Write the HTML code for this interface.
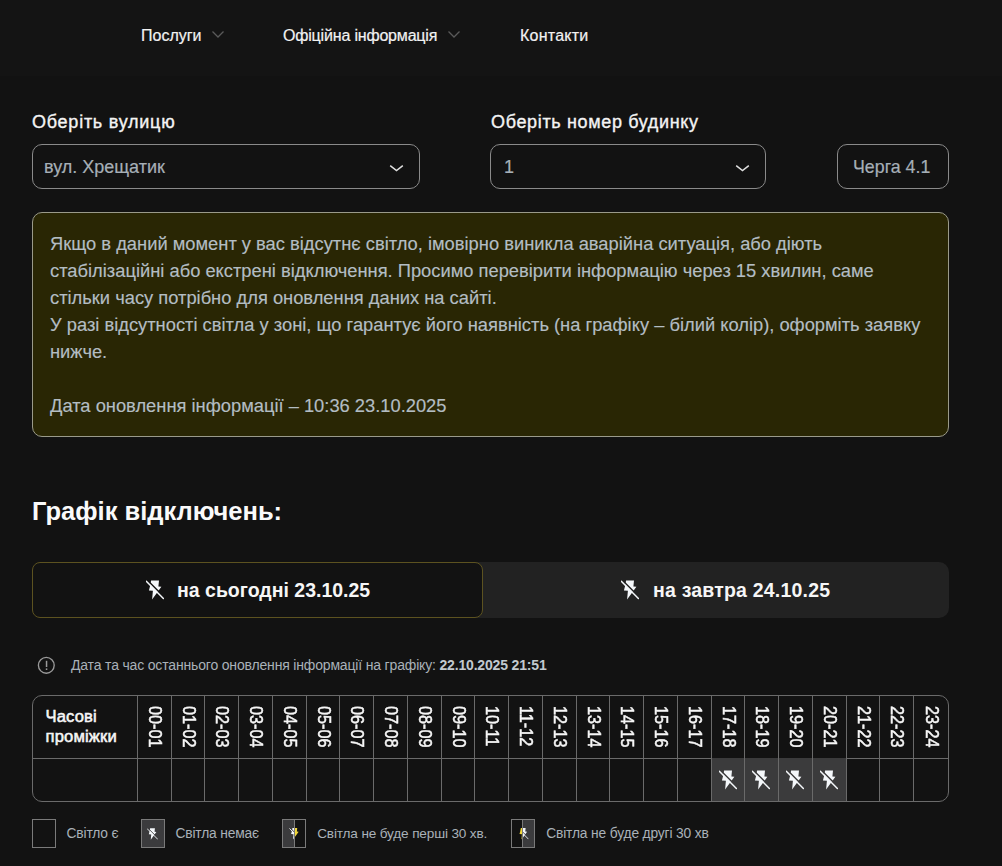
<!DOCTYPE html>
<html lang="uk">
<head>
<meta charset="utf-8">
<style>
*{box-sizing:border-box;margin:0;padding:0}
html,body{width:1002px;height:866px;overflow:hidden;background:#121212;font-family:"Liberation Sans",sans-serif;color:#fff}
.abs{position:absolute;white-space:nowrap}
.hdr{position:absolute;left:0;top:0;width:1002px;height:76px;background:#141414}
.nav{font-size:16px;color:#f2f2f2;line-height:16px;-webkit-text-stroke:0.2px #f2f2f2}
.chev{position:absolute}
.lbl{font-size:18px;letter-spacing:0.5px;color:#f4f4f4;line-height:18px;-webkit-text-stroke:0.35px #f4f4f4}
.sel{position:absolute;border:1px solid #8a8a8a;border-radius:10px;background:#121212}
.seltxt{font-size:18px;color:#a6afb7;line-height:18px;-webkit-text-stroke:0.2px #a6afb7}
.info{position:absolute;left:32px;top:212px;width:917px;height:225px;background:#292604;border:1px solid #9a9a8a;border-radius:10px}
.itxt{font-size:18.32px;color:#b3bdc3;line-height:27px;-webkit-text-stroke:0.15px #b3bdc3}
h2{position:absolute;left:32px;font-size:25.5px;font-weight:700;color:#fafafa;line-height:25px;white-space:nowrap}
.tabs{position:absolute;left:32px;top:562px;width:917px;height:56px;background:#222;border-radius:10px}
.tab1{position:absolute;left:32px;top:562px;width:451px;height:56px;background:#121212;border:1px solid #5c5220;border-radius:8px}
.tabtxt{font-size:19.5px;font-weight:700;color:#f6f6f6;line-height:20px}
.upd{font-size:14px;letter-spacing:-0.17px;color:#a9b1b8;line-height:14px}
.upd b{color:#c2c9cf}
.tbl{position:absolute;left:32px;top:695px;width:917px;height:107px;border:1px solid #6a6a6a;border-radius:10px;overflow:hidden}
.vl{position:absolute;background:#6a6a6a;width:1px}
.hl{position:absolute;background:#6a6a6a;height:1px}
.off{position:absolute;background:#3b3b3c}
.vt{position:absolute;writing-mode:vertical-rl;font-size:18px;font-weight:400;-webkit-text-stroke:0.5px #f6f6f6;color:#f6f6f6;line-height:18px;white-space:nowrap;transform:scaleY(0.9);transform-origin:50% 0}
.th{font-size:16.6px;letter-spacing:0.15px;font-weight:400;-webkit-text-stroke:0.55px #f6f6f6;color:#f6f6f6;line-height:20px}
.lg{position:absolute;top:819px;width:24px;height:29px;border:1px solid #7a7a7a}
.lgt{font-size:13.8px;letter-spacing:-0.15px;color:#a9b1b8;line-height:14px}
</style>
</head>
<body>
<svg width="0" height="0" style="position:absolute">
<defs>
<mask id="gap" maskUnits="userSpaceOnUse" x="0" y="0" width="40" height="40">
<rect x="0" y="0" width="40" height="40" fill="#fff"/>
<line x1="7.3" y1="9.65" x2="24.5" y2="26.8" stroke="#000" stroke-width="1.6"/>
</mask>
<symbol id="boltoff" viewBox="6 9.5 18 19.8">
<g fill="#f4f7fa">
<path mask="url(#gap)" d="M11.1 9.9 L19 9.9 L18.4 15.8 L21.4 16.2 L12.1 28.9 L12.9 20.2 L8.9 19.8 L9.9 16.2 Z"/>
<line x1="6.3" y1="10.7" x2="23.4" y2="27.9" stroke="#f4f7fa" stroke-width="1.5" stroke-linecap="round"/>
</g>
</symbol>
<symbol id="bolty" viewBox="6 9.5 18 19.8">
<path fill="#f2d83a" d="M11.1 9.9 L19 9.9 L18.4 15.8 L21.4 16.2 L12.1 28.9 L12.9 20.2 L8.9 19.8 L9.9 16.2 Z"/>
</symbol>
<clipPath id="cl"><rect x="0" y="0" width="12" height="29"/></clipPath>
<clipPath id="cr"><rect x="12" y="0" width="12" height="29"/></clipPath>
</defs>
</svg>

<div class="hdr"></div>
<div class="abs nav" style="left:141px;top:28px">Послуги</div>
<svg class="chev" style="left:211px;top:29.5px" width="14" height="9"><path d="M1.5 1.5 L7 7 L12.5 1.5" fill="none" stroke="#5a5a5a" stroke-width="1.3"/></svg>
<div class="abs nav" style="left:283px;top:28px;letter-spacing:-0.18px">Офіційна інформація</div>
<svg class="chev" style="left:447px;top:29.5px" width="14" height="9"><path d="M1.5 1.5 L7 7 L12.5 1.5" fill="none" stroke="#5a5a5a" stroke-width="1.3"/></svg>
<div class="abs nav" style="left:520px;top:28px;letter-spacing:0.25px">Контакти</div>

<div class="abs lbl" style="left:32px;top:112.5px;letter-spacing:0.75px">Оберіть вулицю</div>
<div class="abs lbl" style="left:491px;top:112.5px;letter-spacing:0.65px">Оберіть номер будинку</div>

<div class="sel" style="left:32px;top:144px;width:388px;height:45px"></div>
<div class="abs seltxt" style="left:44px;top:158px">вул. Хрещатик</div>
<svg class="chev" style="left:389px;top:164px" width="15" height="8"><path d="M1.2 1.6 L7.5 6.5 L13.8 1.6" fill="none" stroke="#e0e0e0" stroke-width="1.5"/></svg>

<div class="sel" style="left:490px;top:144px;width:276px;height:45px"></div>
<div class="abs seltxt" style="left:504px;top:158px">1</div>
<svg class="chev" style="left:735px;top:164px" width="15" height="8"><path d="M1.2 1.6 L7.5 6.5 L13.8 1.6" fill="none" stroke="#e0e0e0" stroke-width="1.5"/></svg>

<div class="sel" style="left:837px;top:144px;width:112px;height:45px"></div>
<div class="abs seltxt" style="left:853px;top:158px;font-size:17.8px">Черга 4.1</div>

<div class="info"></div>
<div class="abs itxt" style="left:50px;top:230px">Якщо в даний момент у вас відсутнє світло, імовірно виникла аварійна ситуація, або діють<br>стабілізаційні або екстрені відключення. Просимо перевірити інформацію через 15 хвилин, саме<br>стільки часу потрібно для оновлення даних на сайті.<br>У разі відсутності світла у зоні, що гарантує його наявність (на графіку – білий колір), оформіть заявку<br>нижче.<br><br>Дата оновлення інформації – 10:36 23.10.2025</div>

<h2 style="top:499px">Графік відключень:</h2>

<div class="tabs"></div>
<div class="tab1"></div>
<svg class="abs" style="left:146px;top:580px" width="18" height="20"><use href="#boltoff"/></svg>
<div class="abs tabtxt" style="left:177px;top:580px">на сьогодні 23.10.25</div>
<svg class="abs" style="left:621px;top:580px" width="18" height="20"><use href="#boltoff"/></svg>
<div class="abs tabtxt" style="left:653px;top:580px;letter-spacing:0.2px">на завтра 24.10.25</div>

<svg class="abs" style="left:37px;top:656px" width="19" height="19"><circle cx="9.3" cy="9.3" r="7.9" fill="none" stroke="#9a9a9a" stroke-width="1.35"/><rect x="8.8" y="4.8" width="1.5" height="6.2" fill="#9a9a9a"/><rect x="8.8" y="12.4" width="1.5" height="1.6" fill="#9a9a9a"/></svg>
<div class="abs upd" style="left:71px;top:658px">Дата та час останнього оновлення інформації на графіку: <b>22.10.2025 21:51</b></div>

<div class="tbl" id="tbl"></div>
<!--TBL-->
<div class="hl" style="left:33px;top:758px;width:915px"></div>
<div class="abs th" style="left:45.5px;top:706.5px">Часові<br>проміжки</div>
<div class="vt" style="left:146.20px;top:706px">00-01</div>
<div class="vt" style="left:179.70px;top:706px">01-02</div>
<div class="vt" style="left:213.20px;top:706px">02-03</div>
<div class="vt" style="left:247.20px;top:706px">03-04</div>
<div class="vt" style="left:281.20px;top:706px">04-05</div>
<div class="vt" style="left:314.70px;top:706px">05-06</div>
<div class="vt" style="left:348.20px;top:706px">06-07</div>
<div class="vt" style="left:382.20px;top:706px">07-08</div>
<div class="vt" style="left:416.20px;top:706px">08-09</div>
<div class="vt" style="left:449.70px;top:706px">09-10</div>
<div class="vt" style="left:483.20px;top:706px">10-11</div>
<div class="vt" style="left:517.20px;top:706px">11-12</div>
<div class="vt" style="left:551.20px;top:706px">12-13</div>
<div class="vt" style="left:584.70px;top:706px">13-14</div>
<div class="vt" style="left:618.20px;top:706px">14-15</div>
<div class="vt" style="left:652.20px;top:706px">15-16</div>
<div class="vt" style="left:686.20px;top:706px">16-17</div>
<div class="off" style="left:711px;top:758px;width:33px;height:43px"></div>
<svg class="abs" style="left:718.50px;top:770px" width="18" height="20"><use href="#boltoff"/></svg>
<div class="vt" style="left:719.70px;top:706px">17-18</div>
<div class="off" style="left:744px;top:758px;width:34px;height:43px"></div>
<svg class="abs" style="left:752.00px;top:770px" width="18" height="20"><use href="#boltoff"/></svg>
<div class="vt" style="left:753.20px;top:706px">18-19</div>
<div class="off" style="left:778px;top:758px;width:34px;height:43px"></div>
<svg class="abs" style="left:786.00px;top:770px" width="18" height="20"><use href="#boltoff"/></svg>
<div class="vt" style="left:787.20px;top:706px">19-20</div>
<div class="off" style="left:812px;top:758px;width:34px;height:43px"></div>
<svg class="abs" style="left:820.00px;top:770px" width="18" height="20"><use href="#boltoff"/></svg>
<div class="vt" style="left:821.20px;top:706px">20-21</div>
<div class="vt" style="left:854.70px;top:706px">21-22</div>
<div class="vt" style="left:888.20px;top:706px">22-23</div>
<div class="vt" style="left:922.70px;top:706px">23-24</div>
<div class="vl" style="left:137.00px;top:696px;height:105px"></div>
<div class="vl" style="left:171.00px;top:696px;height:105px"></div>
<div class="vl" style="left:204.00px;top:696px;height:105px"></div>
<div class="vl" style="left:238.00px;top:696px;height:105px"></div>
<div class="vl" style="left:272.00px;top:696px;height:105px"></div>
<div class="vl" style="left:306.00px;top:696px;height:105px"></div>
<div class="vl" style="left:339.00px;top:696px;height:105px"></div>
<div class="vl" style="left:373.00px;top:696px;height:105px"></div>
<div class="vl" style="left:407.00px;top:696px;height:105px"></div>
<div class="vl" style="left:441.00px;top:696px;height:105px"></div>
<div class="vl" style="left:474.00px;top:696px;height:105px"></div>
<div class="vl" style="left:508.00px;top:696px;height:105px"></div>
<div class="vl" style="left:542.00px;top:696px;height:105px"></div>
<div class="vl" style="left:576.00px;top:696px;height:105px"></div>
<div class="vl" style="left:609.00px;top:696px;height:105px"></div>
<div class="vl" style="left:643.00px;top:696px;height:105px"></div>
<div class="vl" style="left:677.00px;top:696px;height:105px"></div>
<div class="vl" style="left:711.00px;top:696px;height:105px"></div>
<div class="vl" style="left:744.00px;top:696px;height:105px"></div>
<div class="vl" style="left:778.00px;top:696px;height:105px"></div>
<div class="vl" style="left:812.00px;top:696px;height:105px"></div>
<div class="vl" style="left:846.00px;top:696px;height:105px"></div>
<div class="vl" style="left:879.00px;top:696px;height:105px"></div>
<div class="vl" style="left:913.00px;top:696px;height:105px"></div>
<!--/TBL-->

<div class="lg" style="left:32px"></div>
<div class="abs lgt" style="left:66.5px;top:826.6px">Світло є</div>
<div class="lg" style="left:141px;background:#3b3b3d"></div>
<svg class="abs" style="left:147px;top:827.5px" width="11" height="12"><use href="#boltoff"/></svg>
<div class="abs lgt" style="left:175.4px;top:826.6px">Світла немає</div>
<svg class="abs" style="left:282px;top:819px" width="24" height="29">
<rect x="0.5" y="0.5" width="23" height="28" fill="#121212" stroke="#7a7a7a"/>
<rect x="1" y="1" width="11.5" height="27" fill="#3b3b3d"/>
<g clip-path="url(#cl)"><use href="#boltoff" x="7.3" y="8.8" width="11" height="12"/></g>
<g clip-path="url(#cr)"><use href="#bolty" x="7.3" y="8.8" width="11" height="12"/></g>
<rect x="12" y="1" width="1" height="27" fill="#7a7a7a"/>
</svg>
<div class="abs lgt" style="left:317.2px;top:826.6px;font-size:13.6px">Світла не буде перші 30 хв.</div>
<svg class="abs" style="left:511px;top:819px" width="24" height="29">
<rect x="0.5" y="0.5" width="23" height="28" fill="#121212" stroke="#7a7a7a"/>
<rect x="12" y="1" width="11" height="27" fill="#3b3b3d"/>
<g clip-path="url(#cl)"><use href="#bolty" x="6.7" y="8.8" width="11" height="12"/></g>
<g clip-path="url(#cr)"><use href="#boltoff" x="6.7" y="8.8" width="11" height="12"/></g>
<rect x="11" y="1" width="1" height="27" fill="#7a7a7a"/>
</svg>
<div class="abs lgt" style="left:546.2px;top:826.6px">Світла не буде другі 30 хв</div>
</body>
</html>
